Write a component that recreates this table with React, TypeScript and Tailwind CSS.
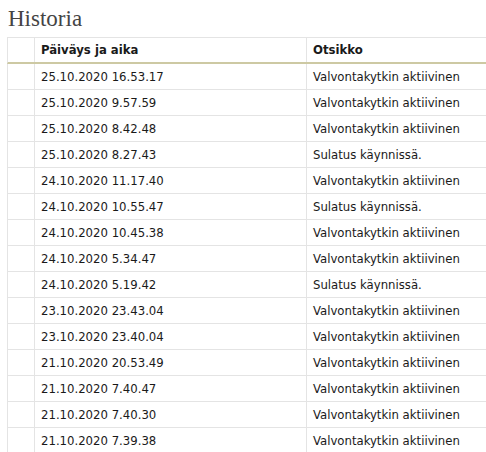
import React from "react";

const rows: [string, string][] = [
  ["25.10.2020 16.53.17", "Valvontakytkin aktiivinen"],
  ["25.10.2020 9.57.59", "Valvontakytkin aktiivinen"],
  ["25.10.2020 8.42.48", "Valvontakytkin aktiivinen"],
  ["25.10.2020 8.27.43", "Sulatus käynnissä."],
  ["24.10.2020 11.17.40", "Valvontakytkin aktiivinen"],
  ["24.10.2020 10.55.47", "Sulatus käynnissä."],
  ["24.10.2020 10.45.38", "Valvontakytkin aktiivinen"],
  ["24.10.2020 5.34.47", "Valvontakytkin aktiivinen"],
  ["24.10.2020 5.19.42", "Sulatus käynnissä."],
  ["23.10.2020 23.43.04", "Valvontakytkin aktiivinen"],
  ["23.10.2020 23.40.04", "Valvontakytkin aktiivinen"],
  ["21.10.2020 20.53.49", "Valvontakytkin aktiivinen"],
  ["21.10.2020 7.40.47", "Valvontakytkin aktiivinen"],
  ["21.10.2020 7.40.30", "Valvontakytkin aktiivinen"],
  ["21.10.2020 7.39.38", "Valvontakytkin aktiivinen"],
];

export default function App() {
  return (
    <div className="w-[486px] h-[452px] overflow-hidden bg-white">
      <h1 className="pl-[8px] pt-[5px] h-[37px] text-[23px] leading-[28px] text-[#444] font-['Liberation_Serif',serif]">
        Historia
      </h1>
      <div className="ml-[7px] w-[520px] font-['DejaVu_Sans_Condensed','DejaVu_Sans',sans-serif] text-[13px] text-[#1a1a1a]">
        <div className="flex h-[27px] border-t border-l border-[#e4e4e4] border-b-2 border-b-[#cdc9a3] font-bold">
          <div className="w-[27px] shrink-0 border-r border-[#e4e4e4]" />
          <div className="w-[272px] shrink-0 border-r border-[#e4e4e4] pl-[6px] flex items-center">Päiväys ja aika</div>
          <div className="flex-1 pl-[6px] flex items-center">Otsikko</div>
        </div>
        {rows.map(([d, t], i) => (
          <div key={i} className="flex h-[26px] border-l border-b border-[#e4e4e4]">
            <div className="w-[27px] shrink-0 border-r border-[#e4e4e4]" />
            <div className="w-[272px] shrink-0 border-r border-[#e4e4e4] pl-[6px] flex items-center">{d}</div>
            <div className="flex-1 pl-[6px] flex items-center">{t}</div>
          </div>
        ))}
      </div>
    </div>
  );
}
